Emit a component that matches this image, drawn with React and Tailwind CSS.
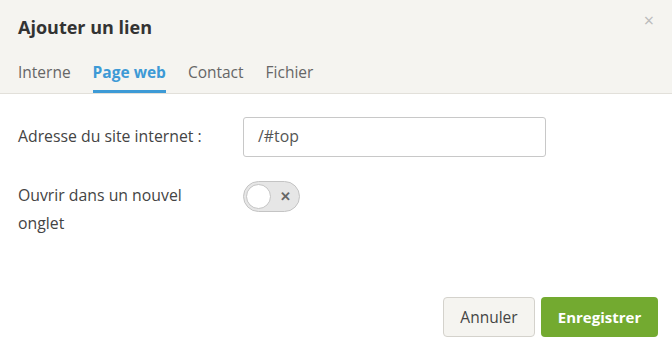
export default function App() {
  return (
    <div className="h-[351px] w-[672px] bg-white font-['Open_Sans',sans-serif] text-[#444]">
      <div className="relative border-b border-[#e2e0da] bg-[#f5f4f0] px-[18px]">
        <h2 className="pt-[13px] text-[18px] font-bold leading-[28px] text-[#333]">Ajouter un lien</h2>
        <button type="button" className="absolute right-[18px] top-[11px] text-[18px] leading-none text-[#bbb]">
          ×
        </button>
        <div className="mt-[20px] flex gap-[22px] text-[15.5px]">
          <Tab label="Interne" />
          <Tab label="Page web" active />
          <Tab label="Contact" />
          <Tab label="Fichier" />
        </div>
      </div>

      <div className="px-[18px] pt-[23px]">
        <div className="flex items-center">
          <label className="w-[225px] text-[15.8px]">Adresse du site internet :</label>
          <div className="flex h-[40px] w-[303px] items-center rounded-[3px] border border-[#c8c8c8] px-[14px] text-[15.8px] text-[#555]">
            /#top
          </div>
        </div>
        <div className="mt-[24px] flex items-start">
          <label className="w-[225px] text-[15.8px] leading-[28px]">
            Ouvrir dans un nouvel
            <br />
            onglet
          </label>
          <div className="flex h-[31px] w-[57px] items-center rounded-full border border-[#c4c4c4] bg-[#e6e6e6] p-[2px]">
            <div className="h-[25px] w-[25px] rounded-full border border-[#c4c4c4] bg-white" />
            <span className="ml-[9px] text-[13px] font-bold leading-none text-[#666]">✕</span>
          </div>
        </div>
      </div>

      <div className="mt-[60px] flex justify-end gap-[6px] px-[14px]">
        <button type="button" className="h-[40px] w-[92px] rounded-[4px] border border-[#d4d2cc] bg-[#f5f4f0] text-[15.5px] text-[#444]">
          Annuler
        </button>
        <button type="button" className="h-[40px] w-[117px] rounded-[4px] bg-[#73aa30] text-[15px] font-bold text-white">
          Enregistrer
        </button>
      </div>
    </div>
  );
}

function Tab({ label, active }) {
  return (
    <div
      className={
        active
          ? 'border-b-[3px] border-[#3d9ad6] pb-[6px] font-bold text-[#3d9ad6]'
          : 'border-b-[3px] border-transparent pb-[6px] text-[#666]'
      }
    >
      {label}
    </div>
  );
}
